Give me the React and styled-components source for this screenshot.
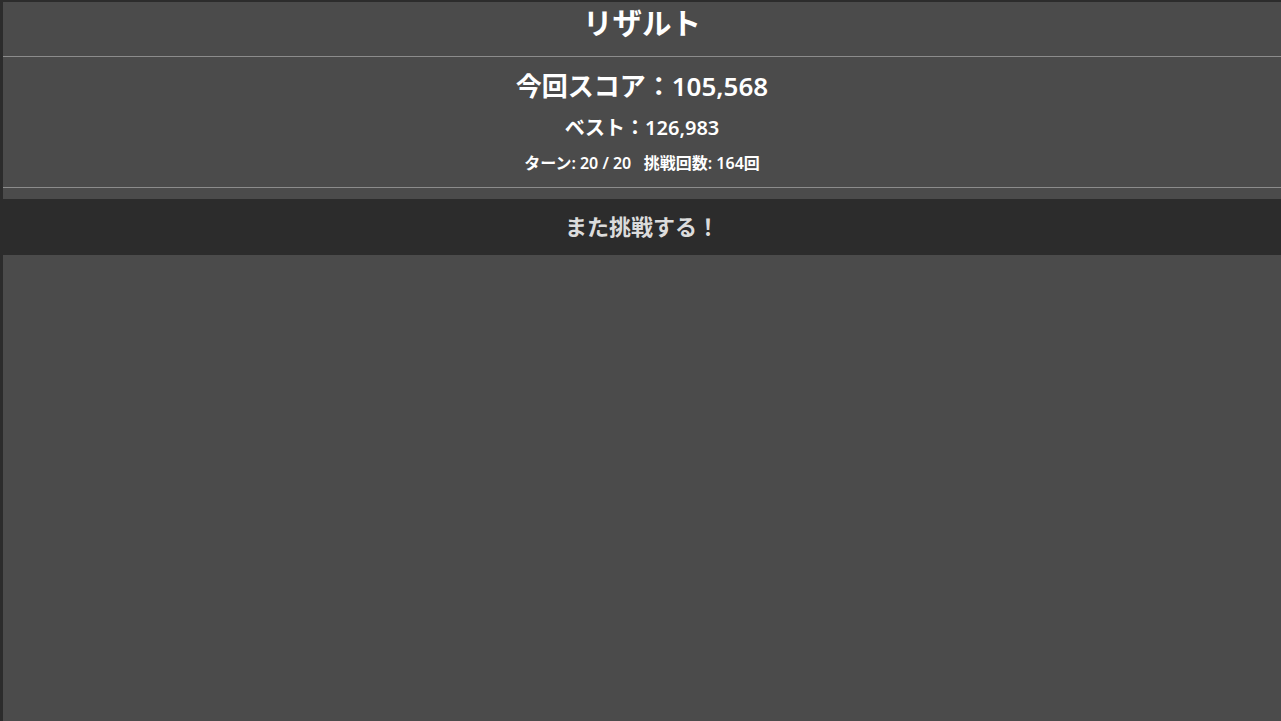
import React from 'react';
import styled, { createGlobalStyle } from 'styled-components';

const GlobalStyle = createGlobalStyle`
  html, body {
    margin: 0;
    padding: 0;
    background: #4b4b4b;
  }
  body {
    font-family: "Noto Sans", "Noto Sans CJK JP", sans-serif;
    color: #ffffff;
  }
`;

const Screen = styled.div`
  box-sizing: border-box;
  min-height: 100vh;
  background: #4b4b4b;
  border-top: 2px solid #2c2c2c;
  border-left: 3px solid #2c2c2c;
`;

const Title = styled.h1`
  margin: 0;
  height: 54px;
  display: flex;
  align-items: center;
  justify-content: center;
  font-size: 29.5px;
  font-weight: 600;
  padding-bottom: 16px;
  box-sizing: border-box;
`;

const Rule = styled.hr`
  margin: 0;
  border: none;
  height: 1px;
  background: #8c8c8c;
`;

const Scores = styled.div`
  display: flex;
  flex-direction: column;
  align-items: center;
  padding: 10px 0 12px;
`;

const ScoreLine = styled.div`
  font-size: ${(p) => p.size}px;
  font-weight: 600;
  line-height: ${(p) => p.lh}px;
  white-space: pre;
`;

const RetryButton = styled.button`
  display: flex;
  align-items: center;
  justify-content: center;
  width: 100%;
  margin-top: 11px;
  height: 56px;
  padding: 0 0 5px;
  border: none;
  background: #2c2c2c;
  color: #dcdcdc;
  font-family: inherit;
  font-size: 22px;
  font-weight: 600;
  cursor: pointer;
`;

export default function App() {
  return (
    <>
      <GlobalStyle />
      <Screen>
        <Title>リザルト</Title>
        <Rule />
        <Scores>
          <ScoreLine size={26} lh={38}>今回スコア：105,568</ScoreLine>
          <ScoreLine size={20} lh={46}>ベスト：126,983</ScoreLine>
          <ScoreLine size={16} lh={24}>{'ターン: 20 / 20   挑戦回数: 164回'}</ScoreLine>
        </Scores>
        <Rule />
        <RetryButton>また挑戦する！</RetryButton>
      </Screen>
    </>
  );
}
